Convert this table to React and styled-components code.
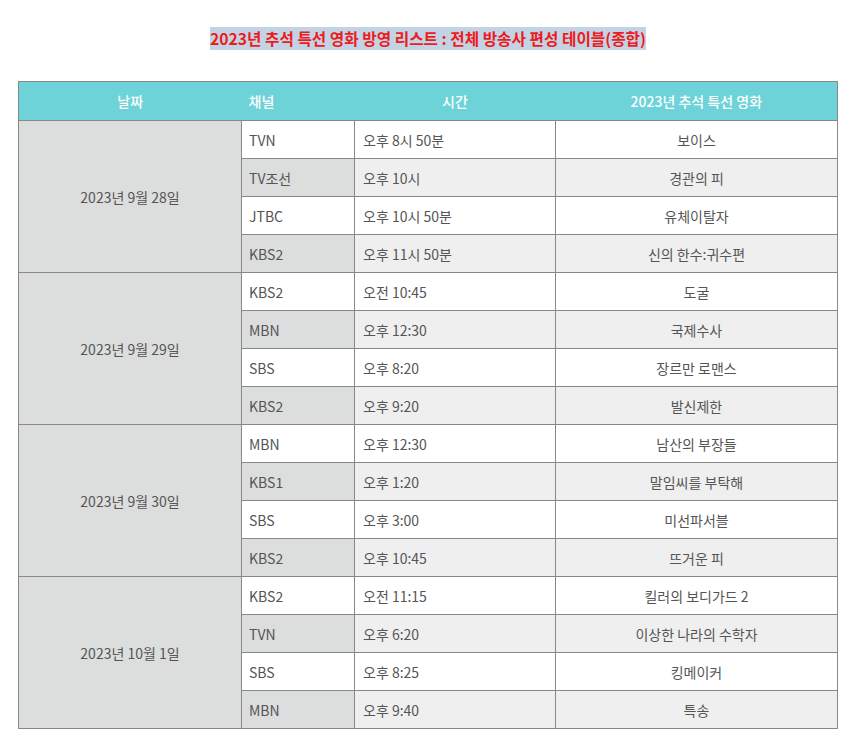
import React from 'react';
import styled, { createGlobalStyle } from 'styled-components';

const GlobalStyle = createGlobalStyle`
  body {
    margin: 0;
    background: #fff;
    font-family: "Noto Sans CJK KR", "Noto Sans", sans-serif;
  }
`;

const Page = styled.div`
  padding: 28px 16px 20px 18px;
`;

const Title = styled.h2`
  margin: 0 0 31px;
  text-align: center;
  font-size: 15.7px;
  line-height: 22px;
  font-weight: 700;
  span {
    color: #ee1b1b;
    background: #c3d3e6;
  }
`;

const Table = styled.table`
  width: 820px;
  table-layout: fixed;
  border-collapse: collapse;
  font-size: 14px;
  color: #555;
  border: 1px solid #888;
`;

const Th = styled.th`
  box-sizing: border-box;
  background: #6dd3d9;
  color: #fff;
  font-weight: 500;
  height: 39px;
  padding: 0 8px 0 ${p => (p.$left ? 7 : 8)}px;
  text-align: ${p => (p.$left ? 'left' : 'center')};
  width: ${p => (p.$w ? `${p.$w}px` : 'auto')};
`;

const Td = styled.td`
  border: 1px solid #888;
  height: 37px;
  padding: 0 8px 0 ${p => p.$pl || 8}px;
  background: ${p => p.$bg};
  text-align: ${p => (p.$center ? 'center' : 'left')};
`;

const data = [
  {
    date: '2023년 9월 28일',
    rows: [
      ['TVN', '오후 8시 50분', '보이스'],
      ['TV조선', '오후 10시', '경관의 피'],
      ['JTBC', '오후 10시 50분', '유체이탈자'],
      ['KBS2', '오후 11시 50분', '신의 한수:귀수편'],
    ],
  },
  {
    date: '2023년 9월 29일',
    rows: [
      ['KBS2', '오전 10:45', '도굴'],
      ['MBN', '오후 12:30', '국제수사'],
      ['SBS', '오후 8:20', '장르만 로맨스'],
      ['KBS2', '오후 9:20', '발신제한'],
    ],
  },
  {
    date: '2023년 9월 30일',
    rows: [
      ['MBN', '오후 12:30', '남산의 부장들'],
      ['KBS1', '오후 1:20', '말임씨를 부탁해'],
      ['SBS', '오후 3:00', '미선파서블'],
      ['KBS2', '오후 10:45', '뜨거운 피'],
    ],
  },
  {
    date: '2023년 10월 1일',
    rows: [
      ['KBS2', '오전 11:15', '킬러의 보디가드 2'],
      ['TVN', '오후 6:20', '이상한 나라의 수학자'],
      ['SBS', '오후 8:25', '킹메이커'],
      ['MBN', '오후 9:40', '특송'],
    ],
  },
];

export default function App() {
  return (
    <Page>
      <GlobalStyle />
      <Title>
        <span>2023년 추석 특선 영화 방영 리스트 : 전체 방송사 편성 테이블(종합)</span>
      </Title>
      <Table>
        <thead>
          <tr>
            <Th $w={223}>날짜</Th>
            <Th $w={113} $left>채널</Th>
            <Th $w={201}>시간</Th>
            <Th>2023년 추석 특선 영화</Th>
          </tr>
        </thead>
        <tbody>
          {data.map(group =>
            group.rows.map((r, i) => {
              const even = i % 2 === 1;
              return (
                <tr key={group.date + i}>
                  {i === 0 && (
                    <Td rowSpan={4} $bg="#dcdddd" $center>
                      {group.date}
                    </Td>
                  )}
                  <Td $bg={even ? '#dcdddd' : '#fff'} $pl={7}>{r[0]}</Td>
                  <Td $bg={even ? '#efefef' : '#fff'}>{r[1]}</Td>
                  <Td $bg={even ? '#efefef' : '#fff'} $center>
                    {r[2]}
                  </Td>
                </tr>
              );
            })
          )}
        </tbody>
      </Table>
    </Page>
  );
}
